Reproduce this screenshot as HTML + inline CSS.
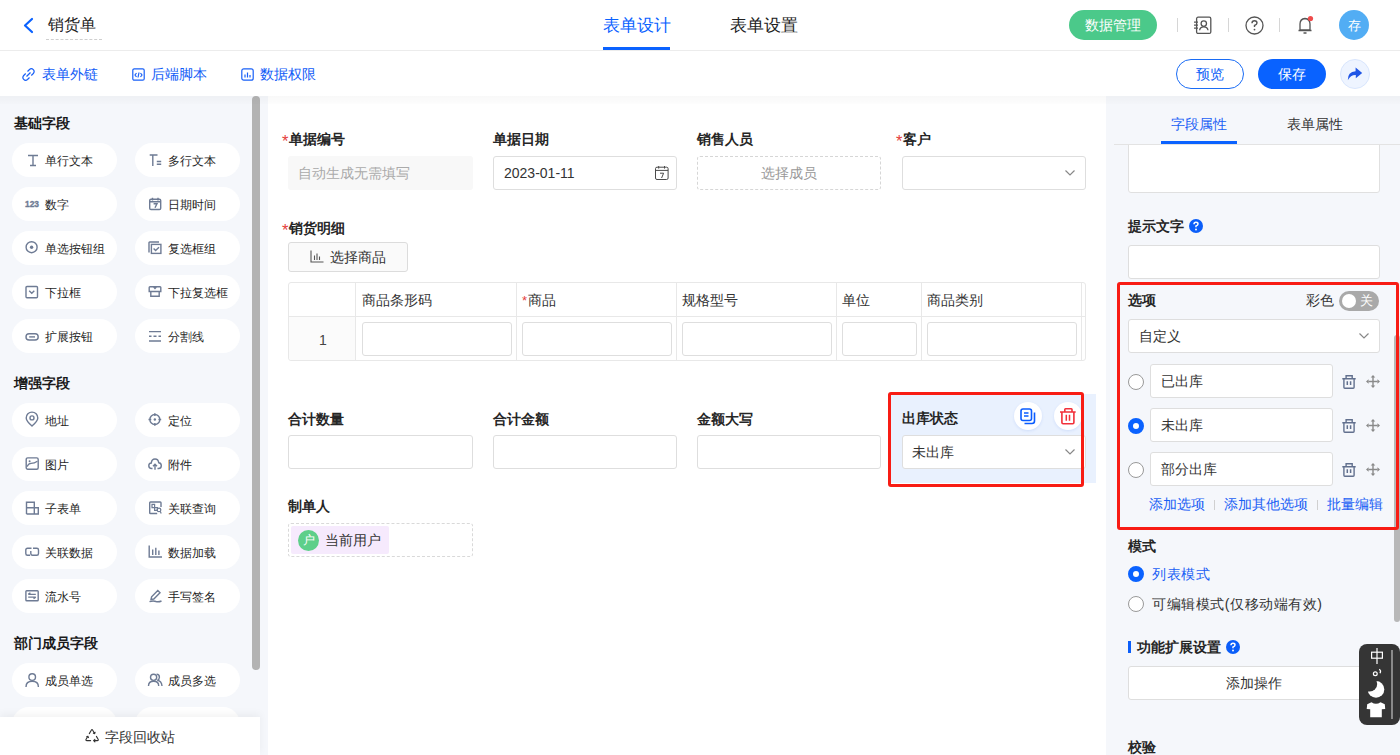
<!DOCTYPE html>
<html><head><meta charset="utf-8">
<style>
*{box-sizing:border-box;margin:0;padding:0}
html,body{width:1400px;height:755px;overflow:hidden;background:#fff;font-family:"Liberation Sans",sans-serif;color:#333;font-size:14px}
.a{position:absolute}
.t{position:absolute;white-space:nowrap;line-height:1}
#hdr{left:0;top:0;width:1400px;height:51px;background:#fff;border-bottom:1px solid #ececec}
#tb{left:0;top:51px;width:1400px;height:45px;background:#fff}
#left{left:0;top:96px;width:268px;height:659px;background:#f5f7fb;overflow:hidden}
#center{left:268px;top:96px;width:838px;height:659px;background:#fff;overflow:hidden}
#right{left:1106px;top:96px;width:294px;height:659px;background:#f5f7fb;overflow:hidden}
#shadow{left:0;top:96px;width:1400px;height:8px;background:linear-gradient(rgba(0,0,0,0.028),rgba(0,0,0,0.006))}
.btn{position:absolute;height:34px;width:105px;border-radius:17px;background:#fff}
.btn svg{position:absolute}
.btn span{position:absolute;left:33px;top:12px;font-size:12px;line-height:1;color:#1f1f1f;white-space:nowrap}
.hd{position:absolute;left:14px;font-size:14px;font-weight:bold;color:#1a1a1a;line-height:1;white-space:nowrap}
.lbl{position:absolute;font-size:14px;font-weight:bold;color:#262626;line-height:1;white-space:nowrap}
.inp{position:absolute;height:34px;border:1px solid #dedede;border-radius:3px;background:#fff}
.req{color:#e5403c;font-weight:normal;display:inline-block;vertical-align:top;width:6.5px;height:14px;line-height:14px;font-size:16.5px;position:relative;top:1.5px}
.ico{fill:none;stroke:#6f7a8f;stroke-width:1.3}
</style></head>
<body>
<!-- HEADER -->
<div id="hdr" class="a">
  <svg class="a" style="left:22px;top:17px" width="12" height="17" viewBox="0 0 12 17"><path d="M10 2 L3 8.5 L10 15" fill="none" stroke="#0a62ff" stroke-width="2.2" stroke-linecap="round" stroke-linejoin="round"/></svg>
  <div class="t" style="left:48px;top:17px;font-size:16px;color:#222">销货单</div>
  <div class="a" style="left:46px;top:39px;width:56px;border-top:1px dashed #cfcfcf"></div>
  <div class="t" style="left:603px;top:18px;font-size:16.8px;color:#0a62ff">表单设计</div>
  <div class="a" style="left:603px;top:47px;width:67px;height:3px;background:#0a62ff"></div>
  <div class="t" style="left:730px;top:18px;font-size:16.8px;color:#222">表单设置</div>
  <div class="a" style="left:1069px;top:10px;width:88px;height:30px;border-radius:15px;background:#4bc98a"></div>
  <div class="t" style="left:1085px;top:18px;font-size:14px;color:#fff;font-weight:500">数据管理</div>
  <div class="a" style="left:1177px;top:18px;width:1px;height:14px;background:#d6d6d6"></div>
  <div class="a" style="left:1228px;top:18px;width:1px;height:14px;background:#d6d6d6"></div>
  <div class="a" style="left:1279px;top:18px;width:1px;height:14px;background:#d6d6d6"></div>
  <!-- contact icon -->
  <svg class="a" style="left:1193px;top:16px" width="20" height="19" viewBox="0 0 20 19"><g fill="none" stroke="#555" stroke-width="1.3"><rect x="3.6" y="1.2" width="14.2" height="16.2" rx="1.5"/><circle cx="10.8" cy="7.6" r="2.7"/><path d="M6.6 14.3Q7 10.8 10.8 10.8Q14.6 10.8 15 14.3"/><path d="M1 6.2H5M1 9.2H5M1 12.2H5"/></g></svg>
  <!-- help icon -->
  <svg class="a" style="left:1245px;top:16px" width="19" height="19" viewBox="0 0 19 19"><circle cx="9.5" cy="9.5" r="8.5" fill="none" stroke="#555" stroke-width="1.3"/><path d="M7 7.3 Q7 4.8 9.5 4.8 Q12 4.8 12 7 Q12 8.5 9.5 9.5 L9.5 11" fill="none" stroke="#555" stroke-width="1.4"/><circle cx="9.5" cy="13.6" r="0.9" fill="#555"/></svg>
  <!-- bell -->
  <svg class="a" style="left:1296px;top:15px" width="20" height="21" viewBox="0 0 20 21"><path d="M4 15 V9 Q4 4 9 3.5 Q14 4 14 9 V15 Z M2.5 15.5 H15.5 M7.5 18 H10.5" fill="none" stroke="#555" stroke-width="1.3" stroke-linejoin="round"/><circle cx="14.5" cy="3.5" r="2.6" fill="#ef4b4b"/></svg>
  <div class="a" style="left:1339px;top:10px;width:30px;height:30px;border-radius:50%;background:#52adf4"></div>
  <div class="t" style="left:1348px;top:19.5px;font-size:12.5px;color:#fff;font-weight:500">存</div>
</div>
<!-- TOOLBAR -->
<div id="tb" class="a">
  <svg class="a" style="left:22px;top:17px" width="13" height="13" viewBox="0 0 13 13"><g fill="none" stroke="#1860f7" stroke-width="1.2"><path d="M5.5 3.5 L7.5 1.5 Q9.5 -0.2 11.3 1.7 Q13 3.5 11.3 5.5 L9.3 7.5"/><path d="M7.5 9.5 L5.5 11.5 Q3.5 13.2 1.7 11.3 Q0 9.5 1.7 7.5 L3.7 5.5"/><path d="M4.5 8.5 L8.5 4.5"/></g></svg>
  <div class="t" style="left:42px;top:16px;font-size:14px;color:#0f5bf7">表单外链</div>
  <svg class="a" style="left:132px;top:17px" width="13" height="13" viewBox="0 0 13 13"><g fill="none" stroke="#1860f7" stroke-width="1.2"><rect x="0.8" y="0.8" width="11.4" height="11.4" rx="1.5"/><path d="M4.5 5 L3 7 L4.5 9 M8.5 5 L10 7 L8.5 9 M7 4.5 L6 9.5"/></g></svg>
  <div class="t" style="left:151px;top:16px;font-size:14px;color:#0f5bf7">后端脚本</div>
  <svg class="a" style="left:241px;top:17px" width="13" height="13" viewBox="0 0 13 13"><g fill="none" stroke="#1860f7" stroke-width="1.2"><rect x="0.8" y="0.8" width="11.4" height="11.4" rx="2"/><path d="M4 6.5 V9.5 M6.5 4.5 V9.5 M9 7 V9.5"/></g></svg>
  <div class="t" style="left:260px;top:16px;font-size:14px;color:#0f5bf7">数据权限</div>
  <div class="a" style="left:1176px;top:8px;width:68px;height:30px;border-radius:15px;border:1px solid #1a6cf5;background:#fff"></div>
  <div class="t" style="left:1196px;top:16px;font-size:14px;color:#0d5ef7">预览</div>
  <div class="a" style="left:1258px;top:8px;width:68px;height:30px;border-radius:15px;background:#0962ff"></div>
  <div class="t" style="left:1278px;top:16px;font-size:14px;color:#fff;font-weight:500">保存</div>
  <div class="a" style="left:1340px;top:8px;width:30px;height:30px;border-radius:50%;background:#eef4ff;border:1px solid #d9e6fd"></div>
  <svg class="a" style="left:1347px;top:16px" width="16" height="14" viewBox="0 0 16 14"><path d="M0.8 13.2Q0.6 4.6 8.6 4.2V0.6L15.2 5.9L8.8 11.3V8Q3.6 7.8 0.8 13.2Z" fill="#1f55e6"/></svg>
</div>
<!-- LEFT -->
<div id="left" class="a">
  <div class="hd" style="top:20px">基础字段</div>
  <div class="btn" style="left:12px;top:47px"><svg width="15" height="14" viewBox="0 0 15 14" style="left:13px;top:10px;overflow:visible"><path fill="none" stroke="#6e7b94" stroke-width="1.4" d="M3 2.5H13M5 12.5H11M8 2.5V12.5"/></svg><span>单行文本</span></div>
  <div class="btn" style="left:135px;top:47px"><svg width="15" height="14" viewBox="0 0 15 14" style="left:13px;top:10px;overflow:visible"><path fill="none" stroke="#6e7b94" stroke-width="1.4" d="M1.7 2H9.5M4.8 2V13M8.8 8.5H13.2M8.8 11.3H13.2"/></svg><span>多行文本</span></div>
  <div class="btn" style="left:12px;top:91px"><svg width="15" height="14" viewBox="0 0 15 14" style="left:13px;top:10px;overflow:visible"><text x="0" y="10.3" font-size="9" font-weight="bold" fill="#6e7b94" stroke="#6e7b94" stroke-width="0.35" font-family="Liberation Sans" textLength="14" lengthAdjust="spacingAndGlyphs">123</text></svg><span>数字</span></div>
  <div class="btn" style="left:135px;top:91px"><svg width="15" height="14" viewBox="0 0 15 14" style="left:13px;top:10px;overflow:visible"><g fill="none" stroke="#6e7b94" stroke-width="1.4"><rect x="1.7" y="2.2" width="11" height="10.3" rx="1.3"/><path d="M4.5 0.8V3.5M10 0.8V3.5M1.7 4.8H12.7M5.6 6.8H9L7 10.8"/></g></svg><span>日期时间</span></div>
  <div class="btn" style="left:12px;top:135px"><svg width="15" height="14" viewBox="0 0 15 14" style="left:13px;top:10px;overflow:visible"><circle fill="none" stroke="#6e7b94" stroke-width="1.4" cx="6.6" cy="6.2" r="5.5"/><circle cx="6.6" cy="6.2" r="1.7" fill="#6e7b94"/></svg><span>单选按钮组</span></div>
  <div class="btn" style="left:135px;top:135px"><svg width="15" height="14" viewBox="0 0 15 14" style="left:13px;top:10px;overflow:visible"><g fill="none" stroke="#6e7b94" stroke-width="1.4"><path d="M1 11.5V1.7Q1 1 1.7 1H11"/><rect x="3.4" y="3.4" width="9.5" height="9"/><path d="M5.6 7.6L7.6 9.6L11 6.2"/></g></svg><span>复选框组</span></div>
  <div class="btn" style="left:12px;top:179px"><svg width="15" height="14" viewBox="0 0 15 14" style="left:13px;top:10px;overflow:visible"><g fill="none" stroke="#6e7b94" stroke-width="1.4"><rect x="1" y="1.5" width="11.5" height="11.3" rx="1"/><path d="M4.2 5.8L6.75 8.2L9.3 5.8"/></g></svg><span>下拉框</span></div>
  <div class="btn" style="left:135px;top:179px"><svg width="15" height="14" viewBox="0 0 15 14" style="left:13px;top:10px;overflow:visible"><g fill="none" stroke="#6e7b94" stroke-width="1.4"><path d="M1.2 6.5V2.5Q1.2 1.7 2 1.7H12Q12.8 1.7 12.8 2.5V6.5ZM5.5 1.7L7 3.5L8.5 1.7M2.8 6.5V11.3H11.2V6.5"/></g></svg><span>下拉复选框</span></div>
  <div class="btn" style="left:12px;top:223px"><svg width="15" height="14" viewBox="0 0 15 14" style="left:13px;top:10px;overflow:visible"><g fill="none" stroke="#6e7b94" stroke-width="1.4"><rect x="1" y="4.8" width="12.2" height="6.2" rx="3.1"/><path d="M4.2 7.9H10"/></g></svg><span>扩展按钮</span></div>
  <div class="btn" style="left:135px;top:223px"><svg width="15" height="14" viewBox="0 0 15 14" style="left:13px;top:10px;overflow:visible"><g fill="none" stroke="#6e7b94" stroke-width="1.4"><path d="M1 2.6H13M1 12H13M1 7.3H3.5M5.5 7.3H8.5M10.5 7.3H13"/></g></svg><span>分割线</span></div>

  <div class="hd" style="top:280px">增强字段</div>
  <div class="btn" style="left:12px;top:307px"><svg width="15" height="15" viewBox="0 0 15 15" style="left:13px;top:9px;overflow:visible"><g fill="none" stroke="#6e7b94" stroke-width="1.4"><path d="M7 14Q1.2 8.8 1.2 5.9A5.8 5.8 0 0 1 12.8 5.9Q12.8 8.8 7 14Z"/><circle cx="7" cy="5.9" r="2"/></g></svg><span>地址</span></div>
  <div class="btn" style="left:135px;top:307px"><svg width="15" height="14" viewBox="0 0 15 14" style="left:13px;top:10px;overflow:visible"><g fill="none" stroke="#6e7b94" stroke-width="1.4"><circle cx="6.85" cy="6.5" r="5"/><path d="M6.85 0.2V3M6.85 10V12.8M0.5 6.5H3.3M10.4 6.5H13.2"/></g><circle cx="6.85" cy="6.5" r="1.2" fill="#6e7b94"/></svg><span>定位</span></div>
  <div class="btn" style="left:12px;top:351px"><svg width="15" height="14" viewBox="0 0 15 14" style="left:13px;top:10px;overflow:visible"><g fill="none" stroke="#6e7b94" stroke-width="1.4"><rect x="1.2" y="0.9" width="12" height="11.3" rx="1.5"/><path d="M2.2 9.6Q3.2 6.6 6 6.4Q9.5 6.3 12.4 4.2" stroke-width="1.3"/></g><circle cx="4.6" cy="4.2" r="1" fill="#6e7b94"/></svg><span>图片</span></div>
  <div class="btn" style="left:135px;top:351px"><svg width="15" height="14" viewBox="0 0 15 14" style="left:13px;top:10px;overflow:visible"><g fill="none" stroke="#6e7b94" stroke-width="1.4"><path d="M4.5 11.5H3.5Q0.8 11.5 0.8 8.7Q0.8 6.3 3.3 6Q3.7 2 7 2Q10.3 2 10.7 5.7Q13.3 6 13.3 8.7Q13.3 11.5 10.5 11.5H9.5"/><path d="M7 12.8V7.5M5 9.3L7 7.3L9 9.3"/></g></svg><span>附件</span></div>
  <div class="btn" style="left:12px;top:395px"><svg width="15" height="14" viewBox="0 0 15 14" style="left:13px;top:10px;overflow:visible"><g fill="none" stroke="#6e7b94" stroke-width="1.4"><path d="M1.5 13V1.2H9.3V6.8M1.5 6.8H13.3V13H1.5M9.3 6.8V13"/></g></svg><span>子表单</span></div>
  <div class="btn" style="left:135px;top:395px"><svg width="15" height="14" viewBox="0 0 15 14" style="left:13px;top:10px;overflow:visible"><g fill="none" stroke="#6e7b94" stroke-width="1.4"><path d="M13 6V1.8Q13 1 12.2 1H2.5Q1.7 1 1.7 1.8V11.7Q1.7 12.5 2.5 12.5H9.2"/><path d="M4 3.3H6.6V6.7H4ZM6.6 6.7H9.4V9.3H6.6Z" stroke-width="1.2"/><circle cx="11" cy="8.9" r="1.8" stroke-width="1.2"/><path d="M12.2 10.3L13.2 12.4" stroke-width="1.2"/></g></svg><span>关联查询</span></div>
  <div class="btn" style="left:12px;top:439px"><svg width="15" height="14" viewBox="0 0 15 14" style="left:13px;top:10px;overflow:visible"><g fill="none" stroke="#6e7b94" stroke-width="1.4"><path d="M6.5 3.3H2.5Q0.8 3.3 0.8 5V8.5Q0.8 10.3 2.5 10.3H5"/><path d="M8 3.3H11.8Q13.5 3.3 13.5 5V8.5Q13.5 10.3 11.8 10.3H7.5Q5.8 10.3 5.8 8.5V6"/></g></svg><span>关联数据</span></div>
  <div class="btn" style="left:135px;top:439px"><svg width="15" height="14" viewBox="0 0 15 14" style="left:13px;top:10px;overflow:visible"><g fill="none" stroke="#6e7b94" stroke-width="1.4"><path d="M1.2 0.5V12H14M4.7 4.5V10M7.8 2.8V10M10.9 5.5V10"/></g></svg><span>数据加载</span></div>
  <div class="btn" style="left:12px;top:483px"><svg width="15" height="14" viewBox="0 0 15 14" style="left:13px;top:10px;overflow:visible"><g fill="none" stroke="#6e7b94" stroke-width="1.4"><rect x="0.9" y="1.8" width="12.3" height="10" rx="0.8"/><path d="M3.2 5.4H10.8M3.2 5.4L5.4 3.8M3.2 8.1H10.8M10.8 8.1L8.5 9.6" stroke-width="1.3"/></g></svg><span>流水号</span></div>
  <div class="btn" style="left:135px;top:483px"><svg width="15" height="14" viewBox="0 0 15 14" style="left:13px;top:10px;overflow:visible"><g fill="none" stroke="#6e7b94" stroke-width="1.4"><path d="M3 10.5L3.6 7.8L9.8 1.6L12 3.8L5.8 10Z M1.5 12.7Q5 11.3 8 12.5Q10.5 13.3 13.5 12"/></g></svg><span>手写签名</span></div>

  <div class="hd" style="top:540px">部门成员字段</div>
  <div class="btn" style="left:12px;top:567px"><svg width="15" height="14" viewBox="0 0 15 14" style="left:13px;top:10px;overflow:visible"><g fill="none" stroke="#6e7b94" stroke-width="1.4"><circle cx="7.2" cy="4.1" r="3.3"/><path d="M1 13.9Q1 8.3 7.2 8.3Q13.4 8.3 13.4 13.9"/></g></svg><span>成员单选</span></div>
  <div class="btn" style="left:135px;top:567px"><svg width="15" height="14" viewBox="0 0 15 14" style="left:13px;top:10px;overflow:visible"><g fill="none" stroke="#6e7b94" stroke-width="1.4"><circle cx="5.6" cy="4.3" r="3.1"/><path d="M0.5 13Q0.5 8.3 5.6 8.3Q10.7 8.3 10.7 13"/><path d="M8.6 1.3Q11.4 1.3 11.4 4.3Q11.4 6.7 9.3 7.3Q13.6 8.1 14 13"/></g></svg><span>成员多选</span></div>
  <div class="btn" style="left:12px;top:611px"></div>
  <div class="btn" style="left:135px;top:611px"></div>
  <div class="a" style="left:252px;top:0;width:8px;height:574px;border-radius:4px;background:#b3b3b3"></div>
  <div class="a" style="left:0;top:621px;width:260px;height:38px;background:#fff;box-shadow:0 -3px 8px rgba(0,0,0,0.05)"></div>
  <svg class="a" style="left:85px;top:632px" width="15" height="15" viewBox="0 0 15 15"><g fill="none" stroke="#333" stroke-width="1.1" stroke-linecap="round" stroke-linejoin="round"><path d="M4.3 5.6L6.3 2.2Q7 1 7.7 2.2L9.6 5.5M8.4 5.3L9.7 5.6L10.1 4.2"/><path d="M11.4 8.4L13.1 11.3Q13.8 12.6 12.3 12.6H8.6M9.9 11.4L8.6 12.6L9.9 13.8"/><path d="M5.6 12.6H1.9Q0.4 12.6 1.1 11.3L2.9 8.3M1.7 8.8L2.9 8.2L3.5 9.6"/></g></svg>
  <div class="t" style="left:105px;top:634px;font-size:14px;color:#333">字段回收站</div>
</div>
<!-- CENTER -->
<div id="center" class="a">
  <!-- row1 -->
  <div class="lbl" style="left:14px;top:36px"><span class="req">*</span>单据编号</div>
  <div class="a" style="left:20px;top:60px;width:185px;height:34px;background:#f8f8f8;border-radius:3px"></div>
  <div class="t" style="left:30px;top:70px;font-size:14px;color:#aaa">自动生成无需填写</div>
  <div class="lbl" style="left:225px;top:36px">单据日期</div>
  <div class="inp" style="left:225px;top:60px;width:184px"></div>
  <div class="t" style="left:236px;top:70px;font-size:14px;color:#333">2023-01-11</div>
  <svg class="a" style="left:387px;top:70px" width="14" height="14" viewBox="0 0 14 14"><g fill="none" stroke="#4a4a4a" stroke-width="1"><rect x="0.5" y="1.2" width="12.6" height="12.3" rx="1.5"/><path d="M0.5 4.4H13.1M3.7 0V2.6M9.5 0V2.6M5 7.2H8.6L6.6 12"/></g></svg>
  <div class="lbl" style="left:429px;top:36px">销售人员</div>
  <div class="a" style="left:429px;top:60px;width:184px;height:34px;border:1px dashed #d6d6d6;border-radius:3px"></div>
  <div class="t" style="left:493px;top:70px;font-size:14px;color:#999">选择成员</div>
  <div class="lbl" style="left:628px;top:36px"><span class="req">*</span>客户</div>
  <div class="inp" style="left:634px;top:60px;width:184px"></div>
  <svg class="a" style="left:796px;top:73px" width="12" height="8" viewBox="0 0 12 8"><path d="M1.5 1.5 L6 6 L10.5 1.5" fill="none" stroke="#888" stroke-width="1.2"/></svg>
  <!-- subform -->
  <div class="lbl" style="left:14px;top:125px"><span class="req">*</span>销货明细</div>
  <div class="a" style="left:20px;top:146px;width:120px;height:30px;border:1px solid #dcdcdc;border-radius:3px;background:#fafafa"></div>
  <svg class="a" style="left:42px;top:154px" width="14" height="13" viewBox="0 0 14 13"><path d="M1 0.5 V12 H13.5 M4.5 5.5 V10 M7 3.5 V10 M9.5 6.5 V10" fill="none" stroke="#555" stroke-width="1.1"/></svg>
  <div class="t" style="left:62px;top:154px;font-size:14px;color:#333">选择商品</div>
  <div class="a" style="left:20px;top:186px;width:798px;height:79px;border:1px solid #e8e8e8;border-radius:3px"></div>
  <div class="a" style="left:20px;top:220px;width:798px;height:1px;background:#e8e8e8"></div>
  <div class="a" style="left:21px;top:221px;width:66px;height:43px;background:#fbfbfb;border-bottom-left-radius:3px"></div>
  <div class="a" style="left:87px;top:186px;width:1px;height:79px;background:#e8e8e8"></div>
  <div class="a" style="left:248px;top:186px;width:1px;height:79px;background:#e8e8e8"></div>
  <div class="a" style="left:408px;top:186px;width:1px;height:79px;background:#e8e8e8"></div>
  <div class="a" style="left:568px;top:186px;width:1px;height:79px;background:#e8e8e8"></div>
  <div class="a" style="left:653px;top:186px;width:1px;height:79px;background:#e8e8e8"></div>
  <div class="a" style="left:813px;top:186px;width:1px;height:79px;background:#e8e8e8"></div>
  <div class="t" style="left:94px;top:197px;font-size:14px;color:#333">商品条形码</div>
  <div class="t" style="left:254px;top:197px;font-size:14px;color:#333"><span class="req" style="font-size:13px;width:5.5px;top:0.5px">*</span>商品</div>
  <div class="t" style="left:414px;top:197px;font-size:14px;color:#333">规格型号</div>
  <div class="t" style="left:574px;top:197px;font-size:14px;color:#333">单位</div>
  <div class="t" style="left:659px;top:197px;font-size:14px;color:#333">商品类别</div>
  <div class="t" style="left:51px;top:237px;font-size:14px;color:#444">1</div>
  <div class="inp" style="left:94px;top:226px;width:150px"></div>
  <div class="inp" style="left:254px;top:226px;width:150px"></div>
  <div class="inp" style="left:414px;top:226px;width:150px"></div>
  <div class="inp" style="left:574px;top:226px;width:75px"></div>
  <div class="inp" style="left:659px;top:226px;width:150px"></div>
  <!-- row2 -->
  <div class="lbl" style="left:20px;top:316px">合计数量</div>
  <div class="inp" style="left:20px;top:339px;width:185px"></div>
  <div class="lbl" style="left:225px;top:316px">合计金额</div>
  <div class="inp" style="left:225px;top:339px;width:184px"></div>
  <div class="lbl" style="left:429px;top:316px">金额大写</div>
  <div class="inp" style="left:429px;top:339px;width:184px"></div>
  <!-- selected -->
  <div class="a" style="left:620px;top:298px;width:208px;height:89px;background:#e9f1fe"></div>
  <div class="lbl" style="left:634px;top:315px">出库状态</div>
  <div class="inp" style="left:634px;top:339px;width:184px"></div>
  <div class="t" style="left:644px;top:349px;font-size:14px;color:#333">未出库</div>
  <svg class="a" style="left:796px;top:352px" width="12" height="8" viewBox="0 0 12 8"><path d="M1.5 1.5 L6 6 L10.5 1.5" fill="none" stroke="#888" stroke-width="1.2"/></svg>
  <div class="a" style="left:746px;top:306px;width:28px;height:28px;border-radius:50%;background:#fff;box-shadow:0 1px 3px rgba(30,90,220,0.12)"></div>
  <svg class="a" style="left:752px;top:312px" width="16" height="17" viewBox="0 0 16 17"><g fill="none" stroke="#0a5cff" stroke-width="1.6"><rect x="1" y="1" width="10.5" height="11.5" rx="2"/><path d="M4 5h4.5M4 8h4.5"/><path d="M14.5 4.5 V13 Q14.5 15.5 12 15.5 H4.5"/></g></svg>
  <div class="a" style="left:786px;top:306px;width:28px;height:28px;border-radius:50%;background:#fff;box-shadow:0 1px 3px rgba(30,90,220,0.12)"></div>
  <svg class="a" style="left:791px;top:312px" width="18" height="17" viewBox="0 0 18 17"><g fill="none" stroke="#f2303a" stroke-width="1.6"><path d="M5.8 3.6V1.5Q5.8 0.8 6.5 0.8H12.3Q13 0.8 13 1.5V3.6M1 4H16.7M2.9 4V14.6Q2.9 15.8 4.1 15.8H13.7Q14.9 15.8 14.9 14.6V4"/><path d="M7.3 6.8V12.8M10.5 6.8V12.8" stroke-width="1.5"/></g></svg>
  <div class="a" style="left:620px;top:296px;width:196px;height:95px;border:3px solid #f81c14;border-radius:3px"></div>
  <!-- row3 -->
  <div class="lbl" style="left:20px;top:403px">制单人</div>
  <div class="a" style="left:20px;top:427px;width:185px;height:34px;border:1px dashed #d9d9d9;border-radius:3px"></div>
  <div class="a" style="left:23px;top:430px;width:98px;height:28px;background:#f6eafd;border-radius:2px"></div>
  <div class="a" style="left:30px;top:434px;width:21px;height:21px;border-radius:50%;background:#5ecf8a"></div>
  <div class="t" style="left:35px;top:439px;font-size:11.5px;color:#fff;font-weight:500">户</div>
  <div class="t" style="left:57px;top:437px;font-size:14px;color:#333">当前用户</div>
</div>
<!-- RIGHT -->
<div id="right" class="a">
  <div class="a" style="left:288px;top:239px;width:6px;height:287px;border-radius:3px;background:#b8b8b8"></div>

  <div class="t" style="left:65px;top:21px;font-size:14px;color:#1a5ff5">字段属性</div>
  <div class="a" style="left:55px;top:45px;width:76px;height:3px;background:#0a62ff"></div>
  <div class="t" style="left:181px;top:21px;font-size:14px;color:#333">表单属性</div>
  <div class="a" style="left:8px;top:48px;width:286px;height:1px;background:#e3e3e3"></div>
  <div class="a" style="left:22px;top:30px;width:252px;height:67px;border:1px solid #e0e0e0;border-radius:3px;background:#fff;clip-path:inset(19px 0 0 0)"></div>
  <div class="lbl" style="left:22px;top:123px">提示文字</div>
  <svg class="a" style="left:83px;top:123px" width="14" height="14" viewBox="0 0 14 14"><circle cx="7" cy="7" r="7" fill="#0b5ef9"/><path d="M5 5.3 Q5 3.3 7 3.3 Q9 3.3 9 5 Q9 6.3 7 7 V8.2" fill="none" stroke="#fff" stroke-width="1.5"/><circle cx="7" cy="10.5" r="0.95" fill="#fff"/></svg>
  <div class="inp" style="left:22px;top:149px;width:252px"></div>
  <div class="a" style="left:11px;top:186px;width:282px;height:248px;border:3px solid #f81c14;border-radius:3px"></div>
  <div class="lbl" style="left:22px;top:197px">选项</div>
  <div class="t" style="left:200px;top:197px;font-size:14px;color:#333">彩色</div>
  <div class="a" style="left:233px;top:195px;width:40px;height:20px;border-radius:10px;background:#a9a9a9"></div>
  <div class="a" style="left:236px;top:198px;width:14px;height:14px;border-radius:50%;background:#fff"></div>
  <div class="t" style="left:254px;top:199px;font-size:12.5px;color:#fff;font-weight:500">关</div>
  <div class="inp" style="left:22px;top:223px;width:252px"></div>
  <div class="t" style="left:33px;top:233px;font-size:14px;color:#333">自定义</div>
  <svg class="a" style="left:252px;top:236px" width="12" height="8" viewBox="0 0 12 8"><path d="M1.5 1.5 L6 6 L10.5 1.5" fill="none" stroke="#888" stroke-width="1.2"/></svg>
  <div class="a" style="left:22px;top:278px;width:16px;height:16px;border-radius:50%;border:1px solid #999;background:#fff"></div>
  <div class="inp" style="left:44px;top:268px;width:183px"></div>
  <div class="t" style="left:55px;top:278px;font-size:14px;color:#333">已出库</div>
  <svg class="a" style="left:236px;top:279px" width="14" height="14" viewBox="0 0 14 14"><g fill="none" stroke="#62708e" stroke-width="1.4"><path d="M4.1 3.2V0.7H10.2V3.2M0.3 3.8H13.7M1.9 3.8V12.3Q1.9 13.2 2.8 13.2H11.2Q12.1 13.2 12.1 12.3V3.8"/><path d="M5.3 6.3V10M8.6 6.3V10" stroke-width="1.5"/></g></svg>
  <svg class="a" style="left:260px;top:278px" width="15" height="15" viewBox="0 0 15 15"><path fill="#8a8a8a" d="M7 1L9.3 3.6H4.7ZM7 14L9.3 11.4H4.7ZM0 7.5L2.6 5.2V9.8ZM14 7.5L11.4 5.2V9.8Z"/><path d="M7 3V12M2.5 7.5H11.5" stroke="#8a8a8a" stroke-width="1.4"/></svg>
  <div class="a" style="left:22px;top:322px;width:16px;height:16px;border-radius:50%;border:5px solid #0a62ff;background:#fff"></div>
  <div class="inp" style="left:44px;top:312px;width:183px"></div>
  <div class="t" style="left:55px;top:322px;font-size:14px;color:#333">未出库</div>
  <svg class="a" style="left:236px;top:323px" width="14" height="14" viewBox="0 0 14 14"><g fill="none" stroke="#62708e" stroke-width="1.4"><path d="M4.1 3.2V0.7H10.2V3.2M0.3 3.8H13.7M1.9 3.8V12.3Q1.9 13.2 2.8 13.2H11.2Q12.1 13.2 12.1 12.3V3.8"/><path d="M5.3 6.3V10M8.6 6.3V10" stroke-width="1.5"/></g></svg>
  <svg class="a" style="left:260px;top:322px" width="15" height="15" viewBox="0 0 15 15"><path fill="#8a8a8a" d="M7 1L9.3 3.6H4.7ZM7 14L9.3 11.4H4.7ZM0 7.5L2.6 5.2V9.8ZM14 7.5L11.4 5.2V9.8Z"/><path d="M7 3V12M2.5 7.5H11.5" stroke="#8a8a8a" stroke-width="1.4"/></svg>
  <div class="a" style="left:22px;top:366px;width:16px;height:16px;border-radius:50%;border:1px solid #999;background:#fff"></div>
  <div class="inp" style="left:44px;top:356px;width:183px"></div>
  <div class="t" style="left:55px;top:366px;font-size:14px;color:#333">部分出库</div>
  <svg class="a" style="left:236px;top:367px" width="14" height="14" viewBox="0 0 14 14"><g fill="none" stroke="#62708e" stroke-width="1.4"><path d="M4.1 3.2V0.7H10.2V3.2M0.3 3.8H13.7M1.9 3.8V12.3Q1.9 13.2 2.8 13.2H11.2Q12.1 13.2 12.1 12.3V3.8"/><path d="M5.3 6.3V10M8.6 6.3V10" stroke-width="1.5"/></g></svg>
  <svg class="a" style="left:260px;top:366px" width="15" height="15" viewBox="0 0 15 15"><path fill="#8a8a8a" d="M7 1L9.3 3.6H4.7ZM7 14L9.3 11.4H4.7ZM0 7.5L2.6 5.2V9.8ZM14 7.5L11.4 5.2V9.8Z"/><path d="M7 3V12M2.5 7.5H11.5" stroke="#8a8a8a" stroke-width="1.4"/></svg>

  <div class="t" style="left:43px;top:402px;font-size:13.5px;color:#1a5ff5">添加选项</div>
  <div class="a" style="left:108px;top:404px;width:1px;height:10px;background:#d0d0d0"></div>
  <div class="t" style="left:118px;top:402px;font-size:13.5px;color:#1a5ff5">添加其他选项</div>
  <div class="a" style="left:211px;top:404px;width:1px;height:10px;background:#d0d0d0"></div>
  <div class="t" style="left:221px;top:402px;font-size:13.5px;color:#1a5ff5">批量编辑</div>
  <div class="lbl" style="left:22px;top:443px">模式</div>
  <div class="a" style="left:22px;top:470px;width:16px;height:16px;border-radius:50%;border:5px solid #0a62ff;background:#fff"></div>
  <div class="t" style="left:46px;top:471px;font-size:14px;color:#1a5ff5;letter-spacing:0.7px">列表模式</div>
  <div class="a" style="left:22px;top:500px;width:16px;height:16px;border-radius:50%;border:1px solid #999;background:#fff"></div>
  <div class="t" style="left:46px;top:501px;font-size:14px;color:#333;letter-spacing:0.55px">可编辑模式(仅移动端有效)</div>
  <div class="a" style="left:22px;top:545px;width:3px;height:12px;background:#0b5ef9"></div>
  <div class="lbl" style="left:31px;top:544px">功能扩展设置</div>
  <svg class="a" style="left:120px;top:544px" width="14" height="14" viewBox="0 0 14 14"><circle cx="7" cy="7" r="7" fill="#0b5ef9"/><path d="M5 5.3 Q5 3.3 7 3.3 Q9 3.3 9 5 Q9 6.3 7 7 V8.2" fill="none" stroke="#fff" stroke-width="1.5"/><circle cx="7" cy="10.5" r="0.95" fill="#fff"/></svg>
  <div class="inp" style="left:22px;top:570px;width:252px"></div>
  <div class="t" style="left:120px;top:580px;font-size:14px;color:#333">添加操作</div>
  <div class="lbl" style="left:22px;top:644px">校验</div>
</div>
<div id="shadow" class="a"></div>
<div class="a" style="left:1359px;top:644px;width:41px;height:81px;border-radius:8px;background:#353535"></div>
<svg class="a" style="left:1359px;top:644px" width="41" height="81" viewBox="0 0 41 81">
<defs><mask id="mm"><rect x="0" y="0" width="41" height="81" fill="#fff"/><circle cx="10.6" cy="40" r="7.6" fill="#000"/></mask></defs>
<rect x="32" y="6" width="2" height="69" fill="#8a8a8a"/>
<g fill="none" stroke="#fff" stroke-width="1.2"><rect x="12.6" y="8.2" width="10.8" height="6"/><path d="M18 4V20"/><circle cx="16.3" cy="29.8" r="1.9"/><path d="M20.2 25.2Q22.5 26.5 21 29.2"/></g>
<circle cx="17" cy="45.4" r="8.3" fill="#fff" mask="url(#mm)"/>
<path d="M12.5 58.2L8.2 60.2L7.7 65L11.2 65.3V73.2H22.8V65.3L26.2 65L25.8 60.2L21.5 58.2Q17 61.2 12.5 58.2Z" fill="#fff"/>
</svg>
</body></html>
